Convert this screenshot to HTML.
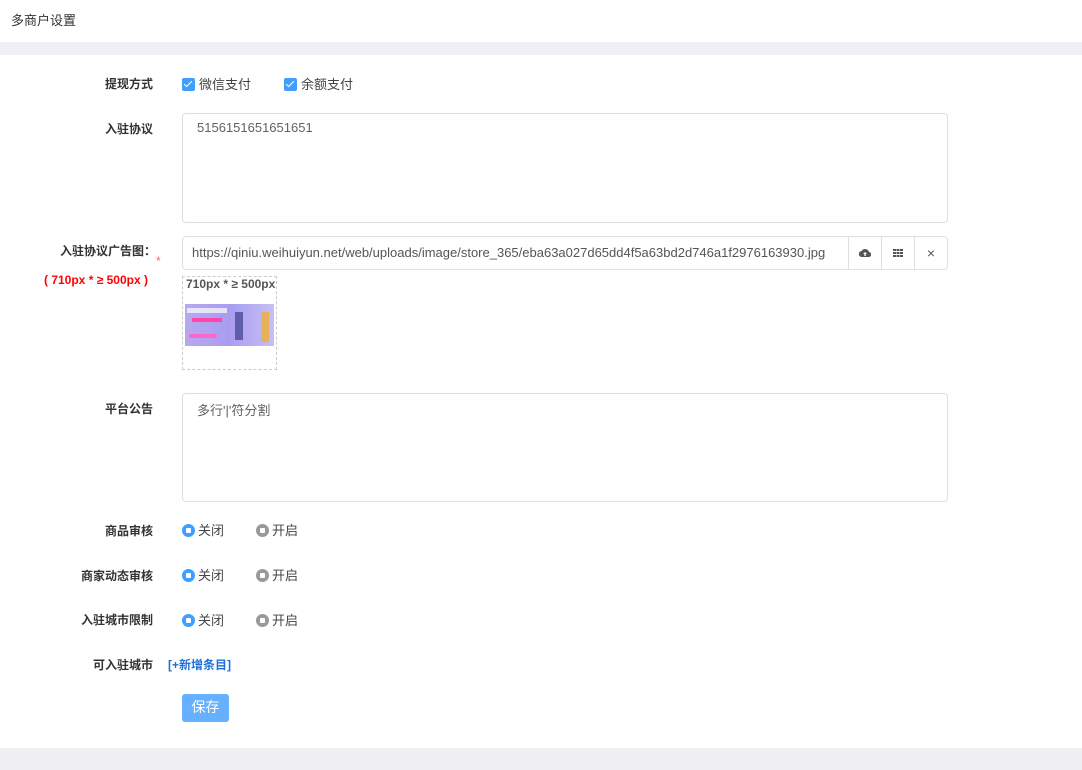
<!DOCTYPE html>
<html><head><meta charset="utf-8"><style>
body{margin:0;width:1082px;height:770px;background:#efeff4;font-family:"Liberation Sans","Noto Sans CJK SC",sans-serif;font-size:13px;color:#333;position:relative;overflow:hidden}
.a{position:absolute}
.hdr{left:0;top:0;width:1082px;height:42px;background:#fff}
.main{left:0;top:55px;width:1082px;height:693px;background:#fff}
.lb{position:absolute;right:929px;font-weight:bold;font-size:12px;color:#333;white-space:nowrap}
.cb{display:inline-block;width:13px;height:13px;background:#409eff;border-radius:2px;vertical-align:-2px;margin-right:4px;position:relative}
.cb:after{content:"";position:absolute;left:4px;top:1px;width:3px;height:7px;border:solid #fff;border-width:0 1.5px 1.5px 0;transform:rotate(45deg)}
.ta{position:absolute;left:182px;width:766px;border:1px solid #dcdfe6;border-radius:4px;background:#fff;color:#606266;box-sizing:border-box;padding:6px 14px;font-size:13px}
.rd{display:inline-block;width:13px;height:13px;border-radius:50%;background:#409eff;vertical-align:-2px;margin-right:3px;position:relative}
.rd:after{content:"";position:absolute;left:4px;top:4px;width:5px;height:5px;border-radius:1px;background:#fff}
.rd.g{background:#999}
.rr{position:absolute;left:182px;font-size:13px;color:#444}
.ig{position:absolute;left:182px;top:236px;width:766px;height:34px;border:1px solid #dcdfe6;border-radius:4px;box-sizing:border-box;background:#fff;display:flex;overflow:hidden}
.ig .t{flex:1;padding:0 9px;line-height:32px;color:#555;white-space:nowrap;overflow:hidden}
.ig .b{width:32px;border-left:1px solid #dcdfe6;display:flex;align-items:center;justify-content:center;color:#555}
</style></head><body>
<div class="a hdr"><div class="a" style="left:11px;top:10px;font-size:13px">多商户设置</div></div>
<div class="a main"></div>

<div class="lb" style="top:75px">提现方式</div>
<div class="a" style="left:182px;top:74px;color:#444"><span class="cb"></span>微信支付</div>
<div class="a" style="left:284px;top:74px;color:#444"><span class="cb"></span>余额支付</div>

<div class="lb" style="top:120px">入驻协议</div>
<div class="ta" style="top:113px;height:110px">5156151651651651</div>

<div class="lb" style="top:242px;right:926px">入驻协议广告图：</div>
<div class="a" style="left:156px;top:254px;color:#f56c6c;font-size:12px">*</div>
<div class="a" style="left:44px;top:273px;color:#f00;font-size:12px;font-weight:bold">( 710px * ≥ 500px )</div>
<div class="ig">
 <div class="t">https://qiniu.weihuiyun.net/web/uploads/image/store_365/eba63a027d65dd4f5a63bd2d746a1f2976163930.jpg</div>
 <div class="b"><svg width="12" height="10" viewBox="0 0 12 10"><path d="M3 9a3 3 0 0 1-.3-6A4 4 0 0 1 10 4a2.5 2.5 0 0 1-.5 5z" fill="#555"/><path d="M6 4l-2 2h1.3v2h1.4V6H8z" fill="#fff"/></svg></div>
 <div class="b"><svg width="10" height="8"><g fill="#555"><rect x="0" y="0" width="3" height="2"/><rect x="3.5" y="0" width="3" height="2"/><rect x="7" y="0" width="3" height="2"/><rect x="0" y="3" width="3" height="2"/><rect x="3.5" y="3" width="3" height="2"/><rect x="7" y="3" width="3" height="2"/><rect x="0" y="6" width="3" height="2"/><rect x="3.5" y="6" width="3" height="2"/><rect x="7" y="6" width="3" height="2"/></g></svg></div>
 <div class="b" style="font-size:14px">×</div>
</div>
<div class="a" style="left:182px;top:276px;width:95px;height:94px;border:1px dashed #ccc;box-sizing:border-box">
 <div class="a" style="left:3px;top:0px;font-size:12px;font-weight:bold;color:#555;white-space:nowrap">710px * ≥ 500px</div>
 <div class="a" style="left:2px;top:27px;width:89px;height:42px;background:linear-gradient(90deg,#b7a9ee,#a99cf0 50%,#c7bff5)">
  <div class="a" style="left:2px;top:4px;width:40px;height:5px;background:#fff;opacity:.7"></div>
  <div class="a" style="left:7px;top:14px;width:30px;height:4px;background:#f4a"></div>
  <div class="a" style="left:4px;top:30px;width:28px;height:4px;background:#f6c;border-radius:2px"></div>
  <div class="a" style="left:50px;top:8px;width:8px;height:28px;background:#3c3f8a;opacity:.7"></div>
  <div class="a" style="left:76px;top:8px;width:8px;height:30px;background:#f0b030;opacity:.8"></div>
 </div>
</div>

<div class="lb" style="top:400px">平台公告</div>
<div class="ta" style="top:393px;height:109px">多行'|'符分割</div>

<div class="lb" style="top:522px">商品审核</div>
<div class="rr" style="top:520px"><span class="rd"></span>关闭</div>
<div class="rr" style="top:520px;left:256px"><span class="rd g"></span>开启</div>
<div class="lb" style="top:567px">商家动态审核</div>
<div class="rr" style="top:565px"><span class="rd"></span>关闭</div>
<div class="rr" style="top:565px;left:256px"><span class="rd g"></span>开启</div>
<div class="lb" style="top:611px">入驻城市限制</div>
<div class="rr" style="top:610px"><span class="rd"></span>关闭</div>
<div class="rr" style="top:610px;left:256px"><span class="rd g"></span>开启</div>
<div class="lb" style="top:656px">可入驻城市</div>
<div class="a" style="left:168px;top:656px;color:#1e6fd9;font-weight:bold;font-size:12px">[+新增条目]</div>
<div class="a" style="left:182px;top:694px;width:47px;height:28px;background:#66b1ff;border-radius:3px;color:#fff;font-size:14px;line-height:27px;text-align:center">保存</div>
</body></html>
